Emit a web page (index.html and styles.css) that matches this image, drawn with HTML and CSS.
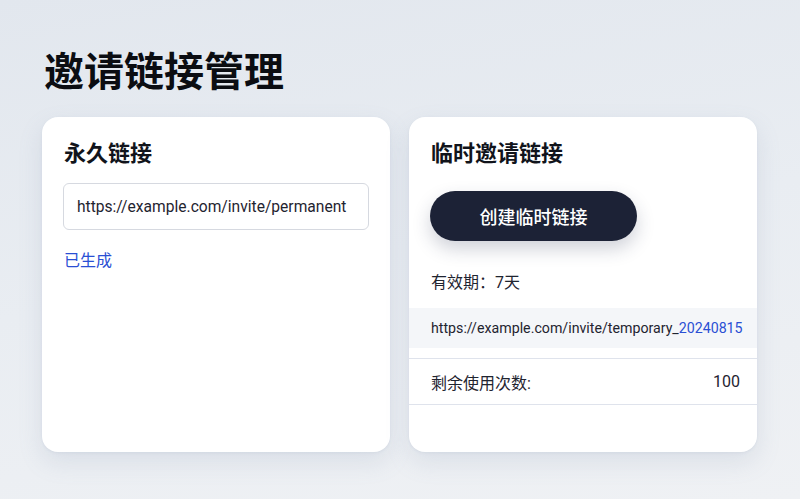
FILE: index.html
```html
<!DOCTYPE html>
<html lang="zh">
<head>
<meta charset="utf-8">
<title>邀请链接管理</title>
<link rel="stylesheet" href="styles.css">
</head>
<body>
<main class="page">
  <h1 class="title">邀请链接管理</h1>
  <div class="cards">
    <section class="card">
      <h2 class="card-title">永久链接</h2>
      <div class="input">https://example.com/invite/permanent</div>
      <p class="status">已生成</p>
    </section>
    <section class="card card-temp">
      <h2 class="card-title">临时邀请链接</h2>
      <button class="btn">创建临时链接</button>
      <p class="validity">有效期：7天</p>
      <div class="link-row">https://example.com/invite/temporary_<span class="hl">20240815</span></div>
      <div class="count-row"><span>剩余使用次数:</span><span>100</span></div>
    </section>
  </div>
</main>
</body>
</html>
```
FILE: styles.css
```css
* { box-sizing: border-box; }
html, body { margin: 0; padding: 0; }
body {
  width: 800px;
  height: 499px;
  overflow: hidden;
  background: linear-gradient(170deg, #e2e7ee 0%, #e9edf2 50%, #eff1f4 100%);
  font-family: Roboto, "Noto Sans CJK SC", sans-serif;
  color: #1c2130;
}
.page {
  padding: 39px 42px 0 42px;
}
.title {
  margin: 0 0 0 2px;
  font-size: 40px;
  line-height: 60px;
  font-weight: 700;
  color: #0b0d12;
  letter-spacing: 0;
  font-family: "Noto Sans CJK SC", sans-serif;
}
.cards {
  margin-top: 18px;
  display: grid;
  grid-template-columns: 348px 348px;
  gap: 19px;
}
.card {
  background: #ffffff;
  border-radius: 16px;
  height: 335px;
  padding: 22px 22px 0 22px;
  box-shadow: 0 10px 24px rgba(120, 135, 170, 0.16), 0 1px 3px rgba(120, 135, 170, 0.10);
}
.card-title {
  margin: 0;
  font-size: 22px;
  line-height: 30px;
  font-weight: 700;
  color: #11141b;
}
.input {
  margin: 14px -1px 0 -1px;
  height: 47px;
  border: 1px solid #d6d9e0;
  border-radius: 6px;
  padding: 0 13px;
  display: flex;
  align-items: center;
  font-size: 15.6px;
  color: #1f2430;
}
.status {
  margin: 19px 0 0 0;
  font-size: 16px;
  line-height: 24px;
  color: #2a4fd4;
}
.btn {
  margin-top: 22px;
  margin-left: -1px;
  height: 50px;
  width: 207px;
  border: none;
  border-radius: 25px;
  background: #1c2236;
  color: #ffffff;
  font-family: Roboto, "Noto Sans CJK SC", sans-serif;
  font-size: 18px;
  font-weight: 500;
  box-shadow: 0 8px 18px rgba(40, 50, 80, 0.22);
}
.validity {
  margin: 30px 0 0 0;
  font-size: 16px;
  line-height: 24px;
  color: #1f2430;
}
.link-row {
  margin: 13px -22px 0 -22px;
  height: 40px;
  padding: 0 22px;
  display: flex;
  align-items: center;
  background: #f4f6f9;
  font-size: 14.2px;
  color: #1f2430;
  white-space: nowrap;
}
.hl { color: #2a4fd4; }
.count-row {
  margin: 10px -22px 0 -22px;
  height: 47px;
  padding: 0 17px 0 22px;
  border-top: 1px solid #dfe3ec;
  border-bottom: 1px solid #dfe3ec;
  display: flex;
  align-items: center;
  justify-content: space-between;
  font-size: 16px;
  color: #1f2430;
}
```
